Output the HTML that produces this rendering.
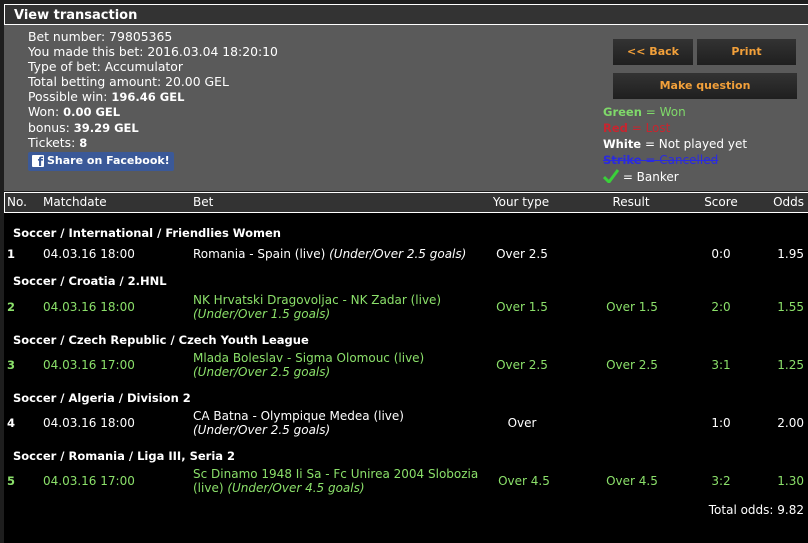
<!DOCTYPE html>
<html><head><meta charset="utf-8"><style>
*{margin:0;padding:0;box-sizing:border-box}
body{width:808px;height:543px;background:#1e1e1e;font-family:"DejaVu Sans","Liberation Sans",sans-serif;font-size:12px;color:#fff;position:relative;overflow:hidden}
.a{position:absolute;white-space:nowrap}
b,.b{font-weight:bold;font-size:11.5px}
#title{left:4px;top:4px;width:804px;height:21px;background:#333;border:1px solid #fff;border-right:none;font-weight:bold;font-size:13px;padding:3px 0 0 9px}
#panel{left:4px;top:25px;width:804px;height:166px;background:#5a5a5a}
.info{left:28px;color:#fff;font-size:12.4px}
.info div{height:15.1px;line-height:15px}
#fb{left:28px;top:152px;width:146px;height:19px;background:#3b5998;border-radius:2px;font-weight:bold;font-size:11px;padding:2px 0 0 19px}
#fb i{position:absolute;left:4px;top:3px;width:12px;height:12px;background:#fff;border-radius:1px;color:#3b5998;font-style:normal;font-size:12px;line-height:14px;text-align:right;padding-right:1px;font-weight:bold}
.btn{background:linear-gradient(#333,#1f1f1f);color:#f2a03a;font-weight:bold;font-size:11px;text-align:center;line-height:26px;height:26px}
#thead{left:4px;top:192px;width:804px;height:21px;background:#333;border:1px solid #fff;border-right:none}
#tbody{left:4px;top:213px;width:804px;height:330px;background:#000}
.g{color:#8be06a}
.c{text-align:center}
.r{text-align:right}
</style></head><body>
<div class="a" id="title">View transaction</div>
<div class="a" id="panel"></div>
<div class="a info" style="top:29px"><div>Bet number: 79805365</div><div>You made this bet: 2016.03.04 18:20:10</div><div>Type of bet: Accumulator</div><div>Total betting amount: 20.00 GEL</div><div>Possible win: <b>196.46 GEL</b></div><div>Won: <b>0.00 GEL</b></div><div>bonus: <b>39.29 GEL</b></div><div>Tickets: <b>8</b></div></div>
<div class="a" id="fb"><i>f</i>Share on Facebook!</div>
<div class="a btn" style="left:613px;top:39px;width:80px">&lt;&lt; Back</div>
<div class="a btn" style="left:697px;top:39px;width:99px">Print</div>
<div class="a btn" style="left:613px;top:73px;width:184px">Make question</div>
<div class="a" style="left:603px;top:105px;color:#7fd96a"><b>Green</b> = Won</div>
<div class="a" style="left:603px;top:121px;color:#c8252f"><b>Red</b> = Lost</div>
<div class="a" style="left:603px;top:137px"><b>White</b> = Not played yet</div>
<div class="a" style="left:603px;top:153px;color:#2a2ae0;text-decoration:line-through"><b>Strike</b> = Cancelled</div>
<div class="a" style="left:603px;top:169px"><svg width="16" height="14" style="vertical-align:-2px"><path d="M1 8 L6 13 L15 1" stroke="#3ad03a" stroke-width="3" fill="none"/></svg> = Banker</div>
<div class="a" id="thead"></div>
<div class="a" id="tbody"></div>
<div class="a" style="left:7px;top:195px">No.</div>
<div class="a" style="left:43px;top:195px">Matchdate</div>
<div class="a" style="left:193px;top:195px">Bet</div>
<div class="a c" style="left:471px;top:195px;width:100px">Your type</div>
<div class="a c" style="left:581px;top:195px;width:100px">Result</div>
<div class="a c" style="left:671px;top:195px;width:100px">Score</div>
<div class="a r" style="left:704px;top:195px;width:100px">Odds</div>

<div class="a b" style="left:13px;top:226px">Soccer / International / Friendlies Women</div>
<div class="a b" style="left:7px;top:247px">1</div>
<div class="a" style="left:43px;top:247px">04.03.16 18:00</div>
<div class="a" style="left:193px;top:247px">Romania - Spain (live) <i>(Under/Over 2.5 goals)</i></div>
<div class="a c" style="left:472px;top:247px;width:100px">Over 2.5</div>
<div class="a c" style="left:671px;top:247px;width:100px">0:0</div>
<div class="a r" style="left:704px;top:247px;width:100px">1.95</div>

<div class="a b" style="left:13px;top:274px">Soccer / Croatia / 2.HNL</div>
<div class="a b g" style="left:7px;top:300px">2</div>
<div class="a g" style="left:43px;top:300px">04.03.16 18:00</div>
<div class="a g" style="left:193px;top:293px;line-height:14px">NK Hrvatski Dragovoljac - NK Zadar (live)<br><i>(Under/Over 1.5 goals)</i></div>
<div class="a c g" style="left:472px;top:300px;width:100px">Over 1.5</div>
<div class="a c g" style="left:582px;top:300px;width:100px">Over 1.5</div>
<div class="a c g" style="left:671px;top:300px;width:100px">2:0</div>
<div class="a r g" style="left:704px;top:300px;width:100px">1.55</div>

<div class="a b" style="left:13px;top:333px">Soccer / Czech Republic / Czech Youth League</div>
<div class="a b g" style="left:7px;top:358px">3</div>
<div class="a g" style="left:43px;top:358px">04.03.16 17:00</div>
<div class="a g" style="left:193px;top:351px;line-height:14px">Mlada Boleslav - Sigma Olomouc (live)<br><i>(Under/Over 2.5 goals)</i></div>
<div class="a c g" style="left:472px;top:358px;width:100px">Over 2.5</div>
<div class="a c g" style="left:582px;top:358px;width:100px">Over 2.5</div>
<div class="a c g" style="left:671px;top:358px;width:100px">3:1</div>
<div class="a r g" style="left:704px;top:358px;width:100px">1.25</div>

<div class="a b" style="left:13px;top:391px">Soccer / Algeria / Division 2</div>
<div class="a b" style="left:7px;top:416px">4</div>
<div class="a" style="left:43px;top:416px">04.03.16 18:00</div>
<div class="a" style="left:193px;top:409px;line-height:14px">CA Batna - Olympique Medea (live)<br><i>(Under/Over 2.5 goals)</i></div>
<div class="a c" style="left:472px;top:416px;width:100px">Over</div>
<div class="a c" style="left:671px;top:416px;width:100px">1:0</div>
<div class="a r" style="left:704px;top:416px;width:100px">2.00</div>

<div class="a b" style="left:13px;top:449px">Soccer / Romania / Liga III, Seria 2</div>
<div class="a b g" style="left:7px;top:474px">5</div>
<div class="a g" style="left:43px;top:474px">04.03.16 17:00</div>
<div class="a g" style="left:193px;top:467px;line-height:14px">Sc Dinamo 1948 Ii Sa - Fc Unirea 2004 Slobozia<br>(live) <i>(Under/Over 4.5 goals)</i></div>
<div class="a c g" style="left:474px;top:474px;width:100px">Over 4.5</div>
<div class="a c g" style="left:582px;top:474px;width:100px">Over 4.5</div>
<div class="a c g" style="left:671px;top:474px;width:100px">3:2</div>
<div class="a r g" style="left:704px;top:474px;width:100px">1.30</div>

<div class="a r" style="left:604px;top:503px;width:200px">Total odds: 9.82</div>
</body></html>
